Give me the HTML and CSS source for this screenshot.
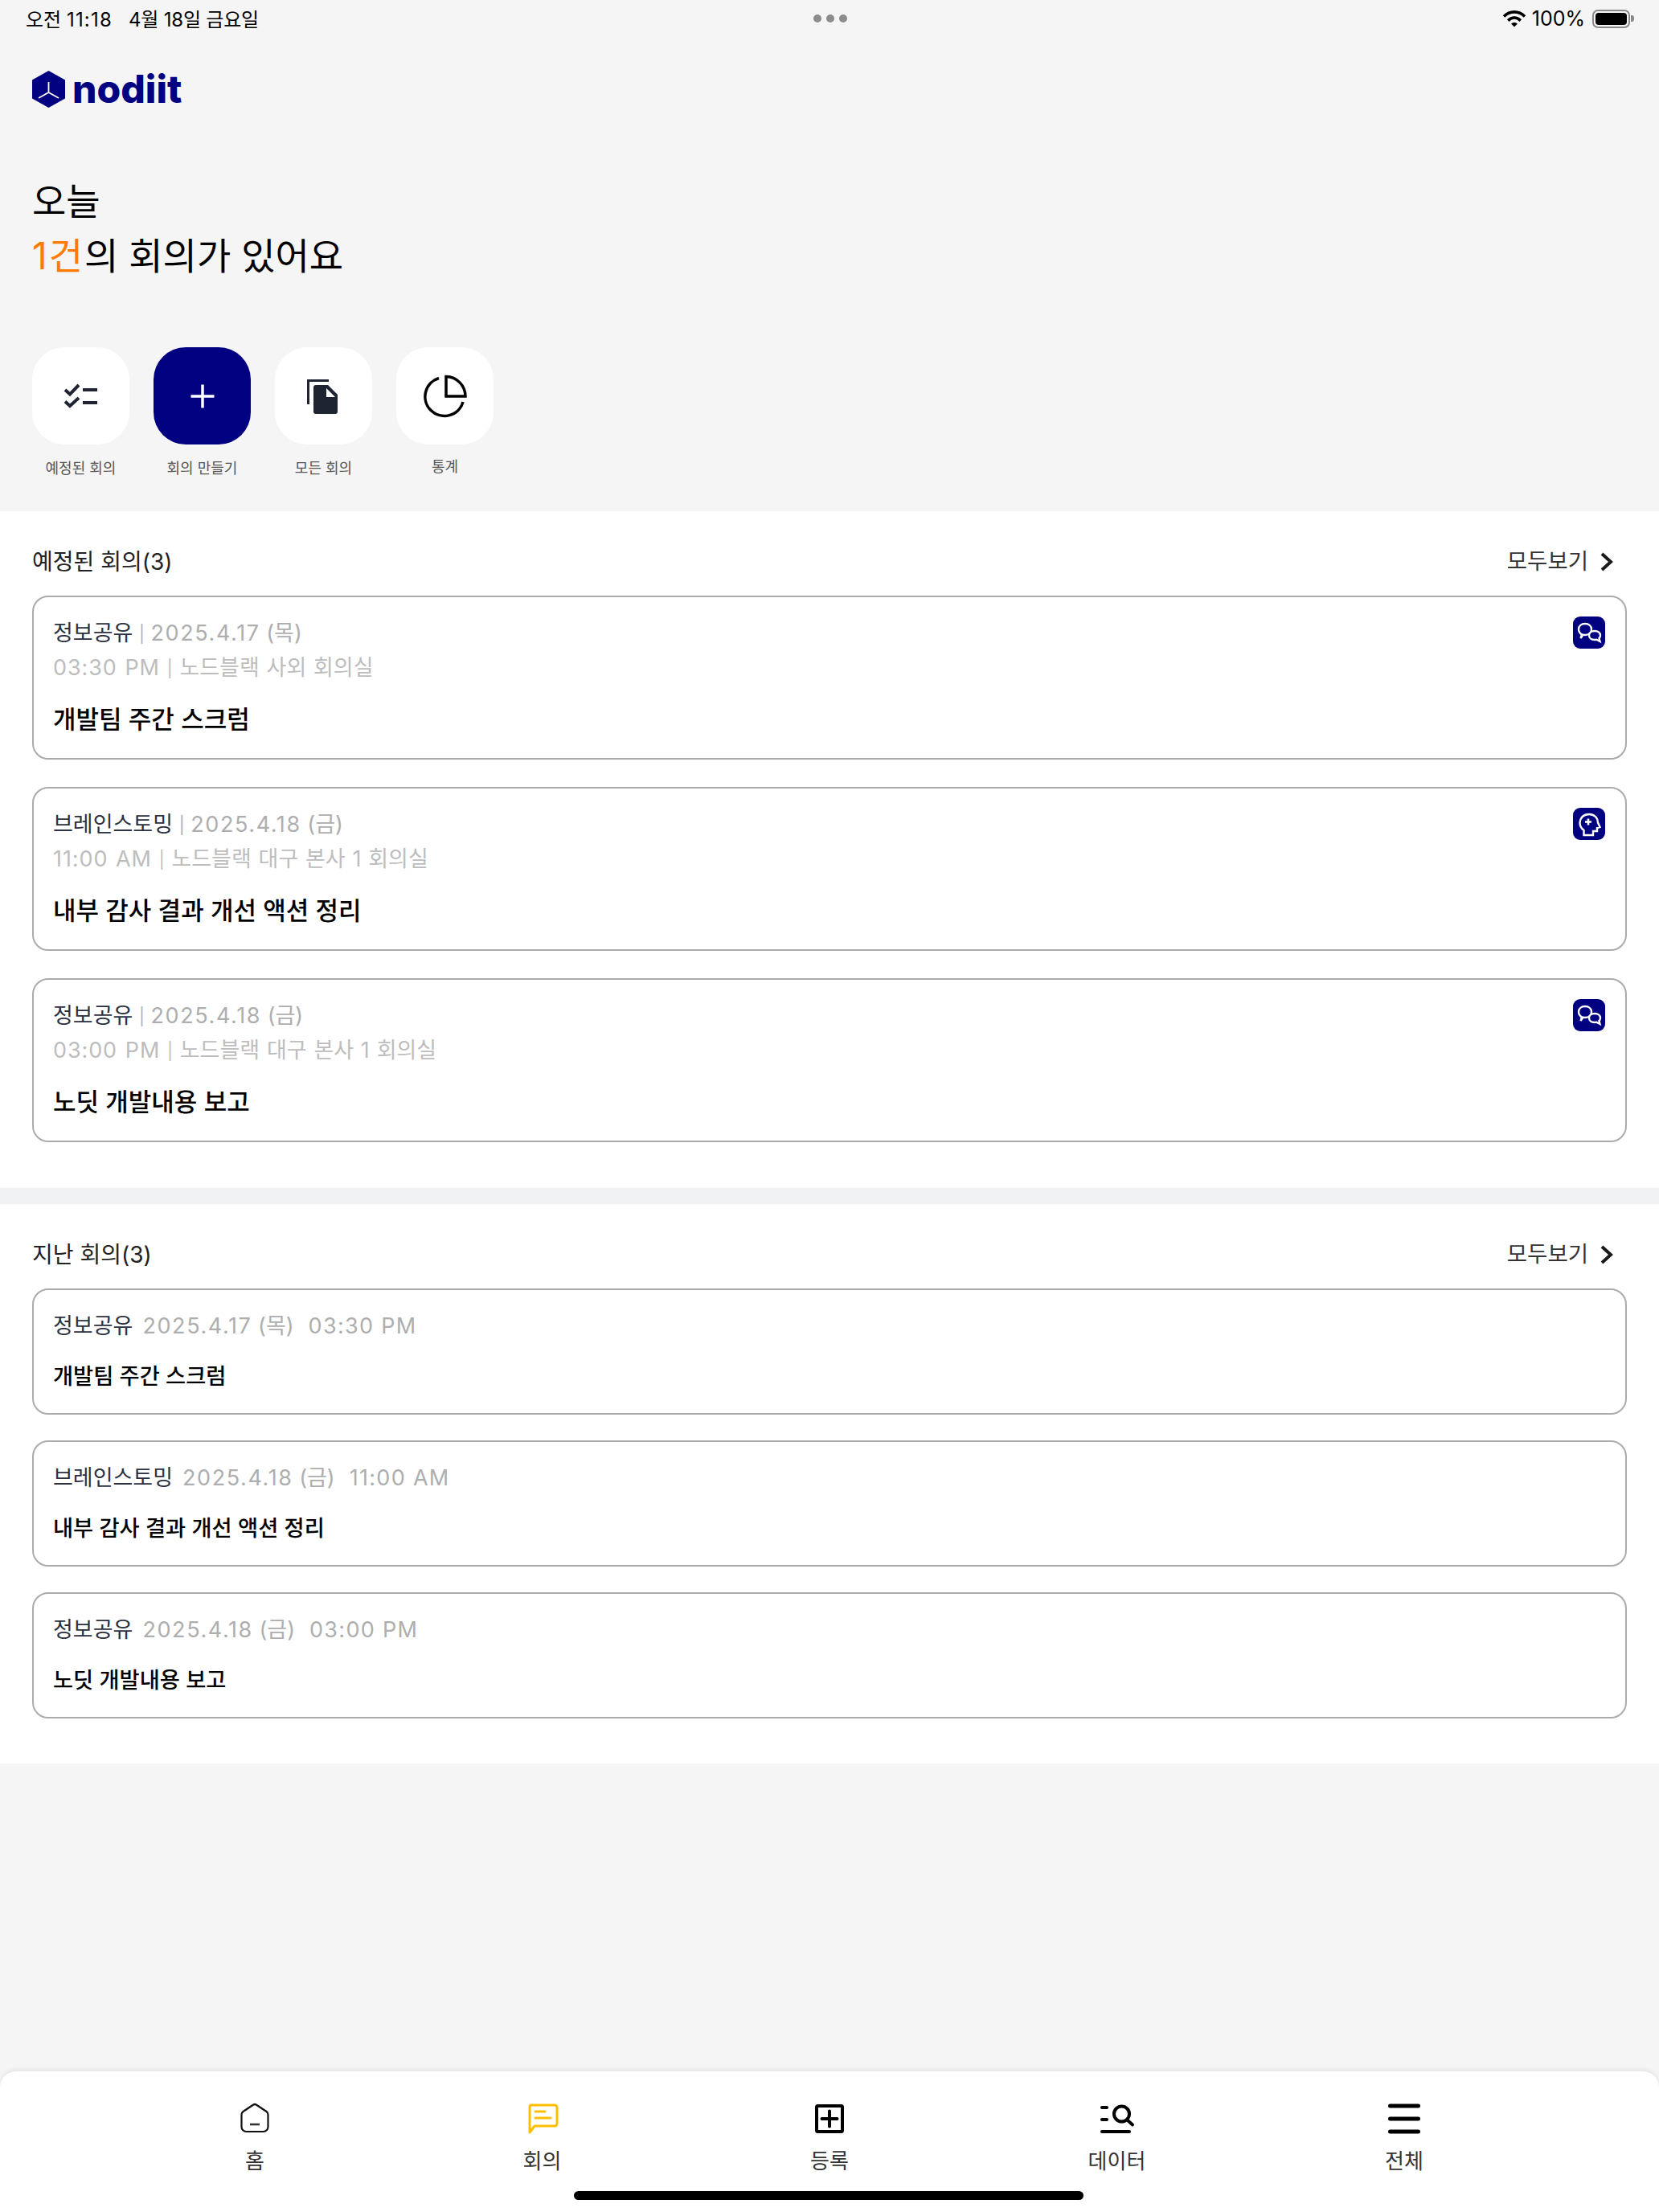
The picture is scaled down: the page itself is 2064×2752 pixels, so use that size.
FILE: index.html
```html
<!DOCTYPE html>
<html lang="ko">
<head>
<meta charset="utf-8">
<title>nodiit</title>
<link rel="stylesheet" href="styles.css">
</head>
<body>
<div class="app">
  <header class="status">
    <div class="status-left"><span>오전 <span class="clock">11:18</span></span><span class="status-date">4월 18일 금요일</span></div>
    <div class="status-dots"><i></i><i></i><i></i></div>
    <div class="status-right">
      <svg class="wifi" width="30" height="22" viewBox="0 0 30 22" fill="none" stroke="#000" stroke-width="3.600"><path d="M2 8.500C9.500 1 20.500 1 28 8.500"/><path d="M7.200 13.600C12 9 18 9 22.800 13.600"/><path d="M11 17.500C13.500 15.400 16.500 15.400 19 17.500L15 21.500z" fill="#000" stroke="none"/></svg>
      <span class="battery-label">100%</span>
      <div class="battery"><div class="battery-fill"></div></div>
      <div class="battery-nub"></div>
    </div>
  </header>

  <div class="brand">
    <svg width="41" height="46" viewBox="0 0 41 46"><path d="M20.500 0L41 11.500V34.500L20.500 46L0 34.500V11.500Z" fill="#000080"/><path d="M20.500 14V27M20.500 27L8 34M20.500 27L33 34" stroke="#fff" stroke-width="1.800" fill="none"/></svg>
    <span class="brand-name">nodiit</span>
  </div>

  <h1 class="greeting">오늘<br><em>1건</em>의 회의가 있어요</h1>

  <nav class="actions">
    <a class="action">
      <span class="action-tile">
        <svg width="48" height="48" viewBox="0 0 48 48" fill="none" stroke="#1f2433" stroke-width="4"><path d="M4 16l6 5.500L21 10M4 30.500l6 5.500L21 26M26 16H44M26 32H44"/></svg>
      </span>
      <span class="action-label">예정된 회의</span>
    </a>
    <a class="action">
      <span class="action-tile action-tile-primary">
        <svg width="48" height="48" viewBox="0 0 48 48" fill="none" stroke="#fff" stroke-width="3.500"><path d="M24 9.500V38.500M9.500 24H38.500"/></svg>
      </span>
      <span class="action-label">회의 만들기</span>
    </a>
    <a class="action">
      <span class="action-tile">
        <svg width="48" height="48" viewBox="0 0 48 48" fill="none"><path d="M30 4.500H4.500V34" stroke="#1f2433" stroke-width="3"/><path d="M14 10H29L41 22V43a3 3 0 0 1-3 3H14a3 3 0 0 1-3-3V13a3 3 0 0 1 3-3z" fill="#1f2433"/><path d="M27 14V25H38z" fill="#fff"/></svg>
      </span>
      <span class="action-label">모든 회의</span>
    </a>
    <a class="action">
      <span class="action-tile">
        <svg width="60" height="60" viewBox="0 0 60 60" fill="none" stroke="#000" stroke-width="3.500"><path d="M22 7.500A24 24 0 1 0 52 37"/><path d="M31 5.500V30H55A24.500 24.500 0 0 0 31 5.500z"/></svg>
      </span>
      <span class="action-label action-label-raised">통계</span>
    </a>
  </nav>

  <section class="panel">
    <div class="panel-head">
      <h2 class="panel-title">예정된 회의(3)</h2>
      <a class="more">모두보기<svg width="16" height="24" viewBox="0 0 16 24" fill="none" stroke="#1a1a1a" stroke-width="4"><path d="M2 2L13 12L2 22"/></svg></a>
    </div>
    <div class="cards">
      <article class="card">
        <div class="card-line"><span class="tag">정보공유</span> <span class="sep">|</span> <span class="date">2025.4.17</span> (목)</div>
        <div class="card-line card-line-soft"><span class="time">03:30 PM</span> <span class="sep">|</span> 노드블랙 사외 회의실</div>
        <div class="card-title">개발팀 주간 스크럼</div>
        <span class="chip"><svg width="40" height="40" viewBox="0 0 40 40" fill="#000080" stroke="#fff" stroke-width="2.400"><path d="M9.500 27l1.500-4.500C8 20.500 7 18.500 7 16c0-4.500 3.500-7 8-7s8 2.500 8 7-3.500 7-8 7c-1 0-1.500 0-2.500-.3z"/><path d="M33.500 31l-1-4c1.500-1.200 1.500-2.500 1.500-3.500 0-3.500-3-5.500-7-5.500s-7 2-7 5.500 3 5.500 7 5.500c.8 0 1.500-.1 2.200-.3z"/></svg></span>
      </article>
      <article class="card">
        <div class="card-line"><span class="tag">브레인스토밍</span> <span class="sep">|</span> <span class="date">2025.4.18</span> (금)</div>
        <div class="card-line card-line-soft"><span class="time">11:00 AM</span> <span class="sep">|</span> 노드블랙 대구 본사 1 회의실</div>
        <div class="card-title">내부 감사 결과 개선 액션 정리</div>
        <span class="chip"><svg width="40" height="40" viewBox="0 0 40 40" fill="none" stroke="#fff" stroke-width="2.400"><path d="M13.500 34V28C10 25.500 8.500 22 8.500 18.500 8.500 12.500 13.500 8 20 8S31 12.500 31 18.500L33.500 24 30 25V29H25V34z"/><path d="M19 13.500v8M15 17.500h8" stroke-width="2.600"/></svg></span>
      </article>
      <article class="card">
        <div class="card-line"><span class="tag">정보공유</span> <span class="sep">|</span> <span class="date">2025.4.18</span> (금)</div>
        <div class="card-line card-line-soft"><span class="time">03:00 PM</span> <span class="sep">|</span> 노드블랙 대구 본사 1 회의실</div>
        <div class="card-title">노딧 개발내용 보고</div>
        <span class="chip"><svg width="40" height="40" viewBox="0 0 40 40" fill="#000080" stroke="#fff" stroke-width="2.400"><path d="M9.500 27l1.500-4.500C8 20.500 7 18.500 7 16c0-4.500 3.500-7 8-7s8 2.500 8 7-3.500 7-8 7c-1 0-1.500 0-2.500-.3z"/><path d="M33.500 31l-1-4c1.500-1.200 1.500-2.500 1.500-3.500 0-3.500-3-5.500-7-5.500s-7 2-7 5.500 3 5.500 7 5.500c.8 0 1.500-.1 2.200-.3z"/></svg></span>
      </article>
    </div>
  </section>

  <section class="panel panel-past">
    <div class="panel-head">
      <h2 class="panel-title">지난 회의(3)</h2>
      <a class="more">모두보기<svg width="16" height="24" viewBox="0 0 16 24" fill="none" stroke="#1a1a1a" stroke-width="4"><path d="M2 2L13 12L2 22"/></svg></a>
    </div>
    <div class="cards cards-past">
      <article class="card card-past">
        <div class="card-line"><span class="tag">정보공유</span><span class="meta-past"><span class="date">2025.4.17</span> (목)</span><span class="meta-past time">03:30 PM</span></div>
        <div class="card-title card-title-past">개발팀 주간 스크럼</div>
      </article>
      <article class="card card-past">
        <div class="card-line"><span class="tag">브레인스토밍</span><span class="meta-past"><span class="date">2025.4.18</span> (금)</span><span class="meta-past time">11:00 AM</span></div>
        <div class="card-title card-title-past">내부 감사 결과 개선 액션 정리</div>
      </article>
      <article class="card card-past">
        <div class="card-line"><span class="tag">정보공유</span><span class="meta-past"><span class="date">2025.4.18</span> (금)</span><span class="meta-past time">03:00 PM</span></div>
        <div class="card-title card-title-past">노딧 개발내용 보고</div>
      </article>
    </div>
  </section>

  <div class="spacer"></div>

  <footer class="tabbar">
    <a class="tab">
      <svg width="48" height="48" viewBox="0 0 48 48" fill="none" stroke="#111" stroke-width="2.200"><path d="M21.500 8a4 4 0 0 1 5 0L38.500 16a5 5 0 0 1 2 4V35a6 6 0 0 1-6 6H13.500a6 6 0 0 1-6-6V20a5 5 0 0 1 2-4z"/><path d="M18 32H30" stroke="#333" stroke-width="2.600"/></svg>
      <span>홈</span>
    </a>
    <a class="tab">
      <svg width="48" height="48" viewBox="0 0 48 48" fill="none" stroke="#ffbf00" stroke-width="3" stroke-linecap="round" stroke-linejoin="round"><path d="M10 8H39a3 3 0 0 1 3 3V31a3 3 0 0 1-3 3H14L8 42V10a2 2 0 0 1 2-2z"/><path d="M15 16H27M15 24H34"/></svg>
      <span>회의</span>
    </a>
    <a class="tab">
      <svg width="48" height="48" viewBox="0 0 48 48" fill="none" stroke="#000" stroke-width="4"><rect x="8" y="9" width="32" height="32" rx="1.500"/><path d="M24 15.500V34.500M14.500 25H33.500" stroke-linecap="round"/></svg>
      <span>등록</span>
    </a>
    <a class="tab">
      <svg width="48" height="48" viewBox="0 0 48 48" fill="none" stroke="#000" stroke-width="4" stroke-linecap="round"><path d="M5 11H11M5 26H11M5 41H39"/><circle cx="29.500" cy="19" r="9.500"/><path d="M37 27L43 32.500"/></svg>
      <span>데이터</span>
    </a>
    <a class="tab">
      <svg width="48" height="48" viewBox="0 0 48 48" fill="none" stroke="#000" stroke-width="5" stroke-linecap="round"><path d="M6.500 9H41.500M6.500 25H41.500M6.500 41H41.500"/></svg>
      <span>전체</span>
    </a>
    <div class="home-indicator"></div>
  </footer>
</div>
</body>
</html>
```

FILE: styles.css
```css
* { box-sizing: border-box; }
html, body { margin: 0; padding: 0; }
body {
  font-family: Inter, "Noto Sans CJK KR", sans-serif;
  color: #000;
  background: #f5f5f5;
}
.app {
  width: 2064px;
  height: 2752px;
  display: flex;
  flex-direction: column;
  overflow: hidden;
}

.status {
  height: 46px;
  display: grid;
  grid-template-columns: 1fr auto 1fr;
  align-items: center;
  padding: 0 31px 0 32px;
  font-size: 24px;
}
.status-left { display: flex; gap: 20px; padding-bottom: 2px; }
.clock { letter-spacing: 1.2px; }
.status-date { letter-spacing: -0.2px; }
.status-dots { display: flex; gap: 6px; }
.status-dots i { width: 10px; height: 10px; border-radius: 50%; background: #8c8c8c; }
.status-right { display: flex; align-items: center; justify-content: flex-end; }
.wifi { margin-right: 7px; }
.battery-label { margin-right: 9px; font-size: 25px; }
.battery {
  width: 47px;
  height: 23px;
  border: 2px solid #8a8a8a;
  border-radius: 7px;
  padding: 2px;
}
.battery-fill { height: 100%; background: #000; border-radius: 4px; }
.battery-nub { width: 4px; height: 8px; margin-left: 1px; background: #8a8a8a; border-radius: 0 3px 3px 0; }

.brand {
  display: flex;
  align-items: center;
  gap: 9px;
  margin: 42px 0 0 40px;
  height: 46px;
}
.brand-name {
  font-family: Inter, sans-serif;
  font-weight: 800;
  font-size: 48px;
  line-height: 46px;
  color: #000080;
}

.greeting {
  margin: 82px 0 0 40px;
  font-size: 46px;
  font-weight: 400;
  line-height: 68px;
}
.greeting em { font-style: normal; color: #ff7a00; letter-spacing: 2px; }

.actions {
  display: flex;
  gap: 30px;
  margin: 80px 0 0 40px;
}
.action { width: 121px; display: flex; flex-direction: column; align-items: center; }
.action-tile {
  width: 121px;
  height: 121px;
  border-radius: 40px;
  background: #fff;
  display: flex;
  align-items: center;
  justify-content: center;
}
.action-tile-primary { background: #000080; }
.action-label {
  margin-top: 17px;
  font-size: 18px;
  line-height: 26px;
  color: #555;
  white-space: nowrap;
}
.action-label-raised { margin-top: 15px; }

.panel {
  background: #fff;
  margin-top: 40px;
  padding: 42px 40px 57px;
  height: 842px;
}
.panel-past {
  margin-top: 0;
  height: 716px;
  border-top: 20px solid #f1f2f4;
}
.panel-head {
  display: flex;
  align-items: center;
  justify-content: space-between;
  height: 40px;
  margin-bottom: 23px;
}
.panel-title { margin: 0; padding-top: 2px; font-size: 28px; font-weight: 400; line-height: 40px; color: #222; }
.more {
  display: flex;
  align-items: center;
  gap: 15px;
  padding-right: 17px;
  font-size: 27.5px;
  line-height: 36px;
  color: #333;
}
.more svg { margin-top: 2px; }

.cards { display: flex; flex-direction: column; gap: 34px; }
.cards-past { gap: 32px; }
.card {
  position: relative;
  height: 204px;
  border: 2px solid #ababab;
  border-radius: 20px;
  padding: 24px 24px 0;
  background: #fff;
}
.card-past { height: 157px; }
.card-line { font-size: 27px; line-height: 42px; color: #aeaeae; white-space: pre; }
.card-line-soft { color: #bdbdbd; word-spacing: 1.2px; }
.tag { color: #2c3040; }
.date { letter-spacing: 1.6px; }
.time { letter-spacing: 1.3px; }
.card-line-soft .time { letter-spacing: 0.9px; }
.sep { font-size: 21px; vertical-align: 1px; }
.meta-past { margin-left: 12px; color: #aeaeae; }
.meta-past + .meta-past { margin-left: 18px; }
.card-title { margin-top: 21px; font-size: 31px; font-weight: 500; line-height: 42px; color: #000; }
.card-title-past { font-size: 27.3px; }
.chip {
  position: absolute;
  top: 24px;
  right: 25px;
  width: 40px;
  height: 40px;
  border-radius: 9px;
  background: #000080;
  display: flex;
}

.spacer { flex: 1; }

.tabbar {
  position: relative;
  height: 175px;
  flex: none;
  display: grid;
  grid-template-columns: repeat(5, 357.5px);
  justify-content: center;
  padding-top: 34px;
  background: #fff;
  border-radius: 20px 20px 0 0;
  box-shadow: 0 -2px 6px rgba(0, 0, 0, .08);
}
.tab { display: flex; flex-direction: column; align-items: center; height: 96px; font-size: 26px; color: #333; line-height: 36px; }
.tab span { margin-top: 12px; }
.home-indicator {
  position: absolute;
  left: 714px;
  top: 149px;
  width: 634px;
  height: 11px;
  border-radius: 6px;
  background: #000;
}
```
